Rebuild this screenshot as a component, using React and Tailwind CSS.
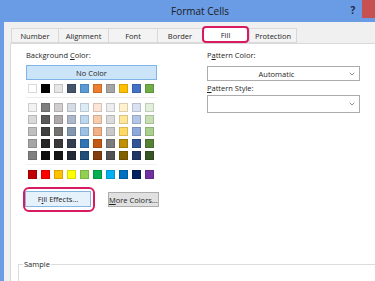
import { ChevronDown } from "lucide-react";

const themeRow = ["#FFFFFF", "#000000", "#E7E6E6", "#44546A", "#5B9BD5", "#ED7D31", "#A5A5A5", "#FFC000", "#4472C4", "#70AD47"];

const tintRows = [
  ["#F2F2F2", "#7F7F7F", "#D0CECE", "#D6DCE4", "#DDEBF7", "#FCE4D6", "#EDEDED", "#FFF2CC", "#D9E1F2", "#E2EFDA"],
  ["#D9D9D9", "#595959", "#AEAAAA", "#ADB9CA", "#BDD7EE", "#F8CBAD", "#DBDBDB", "#FFE699", "#B4C6E7", "#C6E0B4"],
  ["#BFBFBF", "#404040", "#757171", "#8497B0", "#9BC2E6", "#F4B084", "#C9C9C9", "#FFD966", "#8EA9DB", "#A9D08E"],
  ["#A6A6A6", "#262626", "#3A3838", "#333F4F", "#2F75B5", "#C65911", "#7B7B7B", "#BF8F00", "#305496", "#548235"],
  ["#808080", "#0D0D0D", "#171616", "#222A35", "#1F4E78", "#833C0C", "#525252", "#806000", "#203764", "#375623"],
];

const standardRow = ["#C00000", "#FF0000", "#FFC000", "#FFFF00", "#92D050", "#00B050", "#00B0F0", "#0070C0", "#002060", "#7030A0"];

const tabs = [
  { label: "Number", w: "w-[47px]" },
  { label: "Alignment", w: "w-[50px]" },
  { label: "Font", w: "w-[49px]" },
  { label: "Border", w: "w-[45px]" },
  { label: "Fill", w: "w-[47px]", active: true },
  { label: "Protection", w: "w-[48px]" },
];

const SwatchRow = ({ colors }) => (
  <div className="flex gap-x-[4px] ml-[2px]">
    {colors.map((c, i) => (
      <div key={i} className="w-[9px] h-[9px] border border-black/15" style={{ backgroundColor: c }} />
    ))}
  </div>
);

const Dropdown = ({ text, tall }) => (
  <div className={`flex items-center bg-white border border-[#acacac] ${tall ? "h-[18px]" : "h-[15px]"}`}>
    <div className="flex-1 text-center">{text}</div>
    <div className="w-[14px] flex justify-center text-[#555]">
      <ChevronDown size={8} strokeWidth={2} />
    </div>
  </div>
);

export default function App() {
  return (
    <div className="w-[375px] h-[281px] overflow-hidden flex flex-col bg-[#6a9be5] font-['Open_Sans',sans-serif] text-[7.5px] leading-[10px] text-[#1e1e1e]">
      {/* title bar */}
      <div className="h-[22px] shrink-0 flex">
        <div className="flex-1 pl-[56px] text-center text-[10px] leading-[22px] text-[#1c1c1c]">Format Cells</div>
        <div className="w-[18px] text-center text-[10px] font-bold leading-[20px] text-[#1f2a44]">?</div>
        <div className="w-[13px] h-[18px] bg-[#c75050]" />
      </div>

      <div className="flex-1 flex min-h-0">
        <div className="w-[4px]" />
        <div className="flex-1 flex flex-col bg-[#f0f0f0] pl-[6px] pt-[4px]">
          {/* tabs */}
          <div className="flex items-end h-[17px] ml-[1px]">
            {tabs.map((t) =>
              t.active ? (
                <div key={t.label} className={`${t.w} h-[17px] flex items-center justify-center bg-white border-2 border-[#d81b60] rounded-[4px]`}>
                  {t.label}
                </div>
              ) : (
                <div key={t.label} className={`${t.w} h-[15px] flex items-center justify-center bg-[#f3f3f3] border border-r-0 border-[#d9d9d9] last:border-r`}>
                  {t.label}
                </div>
              )
            )}
          </div>

          {/* panel */}
          <div className="flex-1 flex flex-col bg-white border-l border-t border-[#d9d9d9]">
            <div className="flex pl-[15px] pt-[6px]">
              <div className="w-[131px] flex flex-col">
                <div>
                  Background <u className="underline-offset-1">C</u>olor:
                </div>
                <div className="mt-[5px] h-[15px] flex items-center justify-center bg-[#cce4f7] border border-[#7eb4ea]">No Color</div>
                <div className="mt-[4px]">
                  <SwatchRow colors={themeRow} />
                </div>
                <div className="mt-[4px] h-px bg-[#ececec]" />
                <div className="mt-[5px] flex flex-col gap-y-[3px]">
                  {tintRows.map((r, i) => (
                    <SwatchRow key={i} colors={r} />
                  ))}
                </div>
                <div className="mt-[4px] h-px bg-[#f2f2f2]" />
                <div className="mt-[5px]">
                  <SwatchRow colors={standardRow} />
                </div>
                <div className="mt-[8px] flex items-center">
                  <div className="-ml-[3px] border-2 border-[#d81b60] rounded-[6px] pt-[2px] pb-[3px] pr-[2px]">
                    <div className="w-[66px] h-[16px] flex items-center justify-center bg-[#e5f1fb] border border-[#86b6e0]">
                      <span className="whitespace-nowrap">
                        F<u className="underline-offset-1">i</u>ll Effects...
                      </span>
                    </div>
                  </div>
                  <div className="ml-[13px] w-[57px] h-[15px] flex items-center justify-center bg-[#e1e1e1] border border-[#adadad]">
                    <span className="whitespace-nowrap">
                      <u className="underline-offset-1">M</u>ore Colors...
                    </span>
                  </div>
                </div>
              </div>

              <div className="ml-[50px] w-[153px] flex flex-col">
                <div>
                  P<u className="underline-offset-1">a</u>ttern Color:
                </div>
                <div className="mt-[6px]">
                  <Dropdown text="Automatic" />
                </div>
                <div className="mt-[2px]">
                  <u className="underline-offset-1">P</u>attern Style:
                </div>
                <div className="mt-[2px]">
                  <Dropdown text="" tall />
                </div>
              </div>
            </div>

            <div className="flex-1" />
            <fieldset className="ml-[7px] h-[22px] border-l border-t border-[#dcdcdc] pl-[4px]">
              <legend className="px-[1px]">Sample</legend>
            </fieldset>
          </div>
        </div>
      </div>
    </div>
  );
}
